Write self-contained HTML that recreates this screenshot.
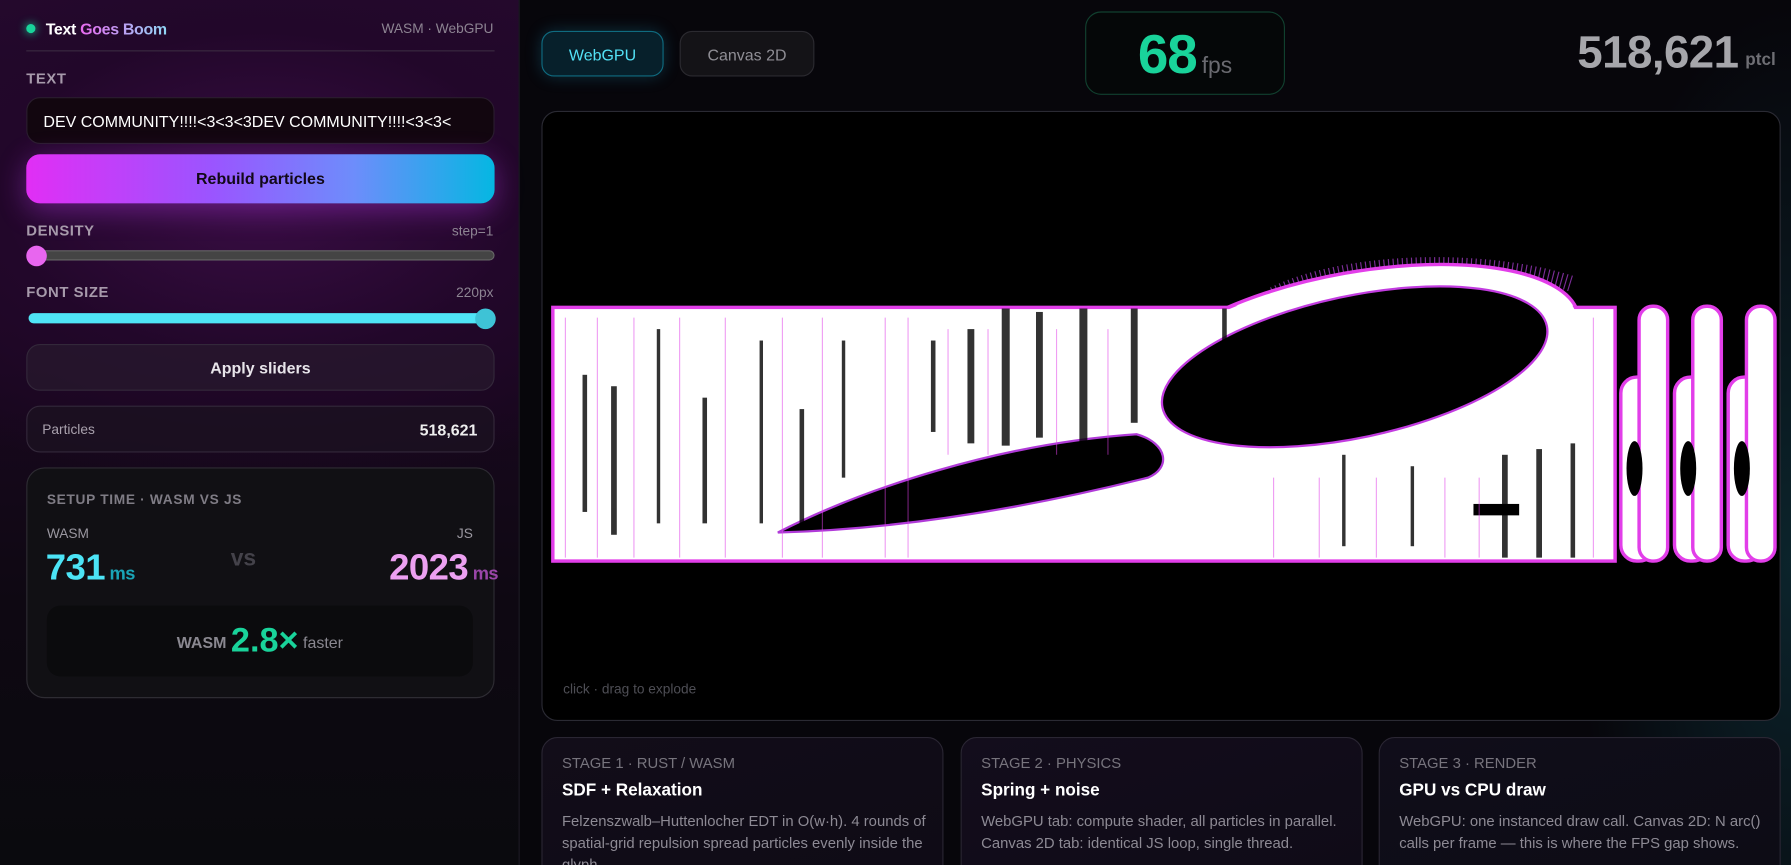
<!DOCTYPE html>
<html><head><meta charset="utf-8"><style>
*{box-sizing:border-box;margin:0;padding:0}
html,body{width:1791px;height:865px;overflow:hidden;background:#07060b}
body{font-family:"Liberation Sans",sans-serif;color:#fff;position:relative}
#w{position:absolute;left:0;top:0;width:1568px;height:757px;transform:scale(1.14222,1.1427);transform-origin:0 0;background:#07060b;overflow:hidden}
.side{position:absolute;left:0;top:0;width:455px;height:757px;border-right:1px solid #1c1a24;
background:radial-gradient(ellipse 420px 260px at 230px 170px,#3a0d45 0%,#22072a 55%,transparent 100%),linear-gradient(180deg,#250a2e 0%,#1a0720 40%,#0e0812 70%,#0a0a0e 100%)}
.abs{position:absolute}
.lbl{font-size:13px;font-weight:bold;color:#a79aab;letter-spacing:.5px}
.sm{font-size:12px;color:#8d8492}
.card{position:absolute;border:1px solid #2a2633;border-radius:14px;background:#110d17}
</style></head><body><div id="w">
<div class="abs" style="left:1380px;top:0;width:188px;height:757px;background:radial-gradient(ellipse at 100% 65%,rgba(15,60,70,.55),transparent 70%)"></div>
<div class="side">
 <div class="abs" style="left:23px;top:21px;width:8px;height:8px;border-radius:50%;background:#19d39a;box-shadow:0 0 8px #19d39a"></div>
 <div class="abs" style="left:40px;top:17px;font-size:14px;font-weight:bold;letter-spacing:-.3px">Text <span style="background:linear-gradient(90deg,#e96af0,#8fd6f5);-webkit-background-clip:text;color:transparent">Goes Boom</span></div>
 <div class="abs sm" style="right:22px;top:18px">WASM · WebGPU</div>
 <div class="abs" style="left:23px;top:44px;width:410px;height:1px;background:#3a2a40"></div>
 <div class="abs lbl" style="left:23px;top:61px">TEXT</div>
 <div class="abs" style="left:23px;top:85px;width:410px;height:41px;border-radius:12px;background:#12060f;border:1px solid #2a1d2e;padding:12px 14px;font-size:14px;white-space:nowrap;overflow:hidden">DEV COMMUNITY!!!!&lt;3&lt;3&lt;3DEV COMMUNITY!!!!&lt;3&lt;3&lt;</div>
 <div class="abs" style="left:23px;top:135px;width:410px;height:43px;border-radius:12px;background:linear-gradient(90deg,#e12ef5,#9a55ff 40%,#6d8dfb 70%,#05b7e2);box-shadow:0 6px 24px rgba(170,50,220,.45);text-align:center;line-height:43px;font-size:14px;font-weight:bold;color:#120818">Rebuild particles</div>
 <div class="abs lbl" style="left:23px;top:194px">DENSITY</div>
 <div class="abs sm" style="right:22px;top:195px">step=1</div>
 <div class="abs" style="left:25px;top:219px;width:408px;height:9px;border-radius:5px;background:#444;border:1px solid #666"></div>
 <div class="abs" style="left:23px;top:215px;width:18px;height:18px;border-radius:50%;background:#e866ef"></div>
 <div class="abs lbl" style="left:23px;top:248px">FONT SIZE</div>
 <div class="abs sm" style="right:22px;top:249px">220px</div>
 <div class="abs" style="left:25px;top:274px;width:406px;height:9px;border-radius:5px;background:#4fe5f6"></div>
 <div class="abs" style="left:416px;top:270px;width:18px;height:18px;border-radius:50%;background:#3ec3d6"></div>
 <div class="abs" style="left:23px;top:301px;width:410px;height:41px;border-radius:12px;background:rgba(40,25,45,.7);border:1px solid #33283a;text-align:center;line-height:41px;font-size:14px;font-weight:bold;color:#e8e4ea">Apply sliders</div>
 <div class="abs" style="left:23px;top:355px;width:410px;height:41px;border-radius:12px;background:rgba(28,18,32,.8);border:1px solid #33283a"></div>
 <div class="abs" style="left:37px;top:369px;font-size:12px;color:#a9a1ad">Particles</div>
 <div class="abs" style="right:36px;top:368px;font-size:14px;font-weight:bold;color:#eee">518,621</div>
 <div class="abs" style="left:23px;top:409px;width:410px;height:202px;border-radius:16px;background:#111014;border:1px solid #2e2c33"></div>
 <div class="abs" style="left:41px;top:430px;font-size:12px;font-weight:bold;color:#7f7c85;letter-spacing:.6px">SETUP TIME · WASM VS JS</div>
 <div class="abs" style="left:41px;top:460px;font-size:12px;color:#9a97a0">WASM</div>
 <div class="abs" style="right:40px;top:460px;font-size:12px;color:#9a97a0">JS</div>
 <div class="abs" style="left:40px;top:478px;font-size:32px;font-weight:bold;color:#4ce4f6;letter-spacing:-.5px">731<span style="font-size:16px;color:#1aa4b6;margin-left:4px">ms</span></div>
 <div class="abs" style="left:202px;top:478px;font-size:20px;font-weight:bold;color:#44424a">vs</div>
 <div class="abs" style="right:18px;top:478px;font-size:32px;font-weight:bold;color:#eca0f1;letter-spacing:-.5px">2023<span style="font-size:16px;color:#9a46a8;margin-left:4px">ms</span></div>
 <div class="abs" style="left:41px;top:530px;width:373px;height:62px;border-radius:12px;background:#0b0b0d;text-align:center;padding-top:14px;font-size:14px;color:#8a8890;font-weight:bold">WASM <span style="font-size:30px;color:#19d39a;vertical-align:-3px">2.8×</span> <span style="font-weight:normal;font-size:14px">faster</span></div>
</div>

<div class="abs" style="left:474px;top:27px;width:107px;height:40px;border-radius:11px;background:#07202b;border:1px solid #0f6b80;box-shadow:0 0 14px rgba(30,170,210,.25);text-align:center;line-height:40px;font-size:14px;color:#53e2f6">WebGPU</div>
<div class="abs" style="left:595px;top:27px;width:118px;height:40px;border-radius:11px;background:#141317;border:1px solid #2b2a30;text-align:center;line-height:40px;font-size:14px;color:#8f8e95">Canvas 2D</div>
<div class="abs" style="left:950px;top:10px;width:175px;height:73px;border-radius:14px;background:#050708;border:1px solid #11402f;text-align:center;padding-top:10px"><span style="font-size:48px;font-weight:bold;color:#19d39a;letter-spacing:-1px">68</span> <span style="font-size:20px;color:#6a6a70">fps</span></div>
<div class="abs" style="right:46px;top:24px;font-size:40px;font-weight:bold;color:#a6a6ab;letter-spacing:-.5px">518,621</div>
<div class="abs" style="left:1528px;top:44px;font-size:15px;font-weight:bold;color:#6e6e74">ptcl</div>

<div class="abs" style="left:474px;top:97px;width:1085px;height:534px;border-radius:14px;background:#000;border:1px solid #2a2a33;overflow:hidden">
<svg width="1085" height="534" style="position:absolute;left:0;top:0">
 <path d="M640 160 C700 130 820 125 900 150" stroke="#b040d8" stroke-width="14" fill="none" stroke-dasharray="1 3" opacity=".7"/>
 <g stroke="#e23ee9" stroke-width="3" fill="#fff">
  <ellipse cx="715" cy="212" rx="195" ry="72" transform="rotate(-10 715 212)"/>
  <rect x="9" y="171" width="930" height="222"/>
  <rect x="944" y="232" width="30" height="161" rx="14"/>
  <rect x="960" y="170" width="25" height="223" rx="12"/>
  <rect x="991" y="232" width="30" height="161" rx="14"/>
  <rect x="1007" y="170" width="25" height="223" rx="12"/>
  <rect x="1038" y="232" width="30" height="161" rx="14"/>
  <rect x="1054" y="170" width="25" height="223" rx="12"/>
 </g>
 <rect x="11" y="173" width="926" height="218" fill="#fff"/>
 <ellipse cx="715" cy="212" rx="193" ry="70" transform="rotate(-10 715 212)" fill="#fff"/>
 <g fill="#000">
  <ellipse cx="956" cy="312" rx="7" ry="24"/><ellipse cx="1003" cy="312" rx="7" ry="24"/><ellipse cx="1050" cy="312" rx="7" ry="24"/>
  <ellipse cx="711" cy="223" rx="172" ry="62" transform="rotate(-12 711 223)" stroke="#c23ce0" stroke-width="2"/>
  <path d="M206 368 C280 330 400 290 520 282 C548 290 550 312 530 320 C430 345 320 365 206 368Z" stroke="#b03ad8" stroke-width="2"/>
  <rect x="815" y="343" width="40" height="10"/>
 </g>
 <g fill="#000" opacity=".8">
  <rect x="35" y="230" width="4" height="120"/><rect x="60" y="240" width="5" height="130"/><rect x="100" y="190" width="3" height="170"/>
  <rect x="140" y="250" width="4" height="110"/><rect x="190" y="200" width="3" height="160"/><rect x="225" y="260" width="4" height="100"/>
  <rect x="262" y="200" width="3" height="120"/><rect x="340" y="200" width="4" height="80"/><rect x="372" y="190" width="6" height="100"/>
  <rect x="402" y="172" width="7" height="120"/><rect x="432" y="175" width="6" height="110"/><rect x="470" y="172" width="7" height="120"/>
  <rect x="515" y="172" width="6" height="100"/><rect x="595" y="172" width="4" height="30"/>
  <rect x="700" y="300" width="3" height="80"/><rect x="760" y="310" width="3" height="70"/><rect x="840" y="300" width="5" height="90"/>
  <rect x="870" y="295" width="5" height="95"/><rect x="900" y="290" width="4" height="100"/>
 </g>
 <g stroke="#e040e8" stroke-width="1" opacity=".5">
  <path d="M20 180V390M48 180V390M80 180V390M120 180V390M160 180V390M210 180V390M245 180V390M300 180V390M320 180V390M355 190V300M390 190V300M450 190V300M495 190V300M640 320V390M680 320V390M730 320V390M790 320V390M820 320V390M920 180V390"/>
 </g>
 <text x="18" y="509" font-size="12" fill="#4e4e55" font-family="Liberation Sans">click · drag to explode</text>
</svg>
</div>

<div class="card" style="left:474px;top:645px;width:352px;height:240px;background:linear-gradient(160deg,#120d19,#0d0a14)"></div>
<div class="card" style="left:841px;top:645px;width:352px;height:240px;background:linear-gradient(160deg,#130d1c,#0d0a14)"></div>
<div class="card" style="left:1207px;top:645px;width:352px;height:240px;background:linear-gradient(160deg,#100d1a,#0b0c12)"></div>
<div class="abs" style="left:492px;top:660px;font-size:13px;color:#77747d">STAGE 1 · RUST / WASM</div>
<div class="abs" style="left:492px;top:683px;font-size:15px;font-weight:bold">SDF + Relaxation</div>
<div class="abs" style="left:492px;top:709px;width:322px;font-size:13px;line-height:19px;color:#8d8a94">Felzenszwalb–Huttenlocher EDT in O(w·h). 4 rounds of spatial-grid repulsion spread particles evenly inside the glyph.</div>
<div class="abs" style="left:859px;top:660px;font-size:13px;color:#77747d">STAGE 2 · PHYSICS</div>
<div class="abs" style="left:859px;top:683px;font-size:15px;font-weight:bold">Spring + noise</div>
<div class="abs" style="left:859px;top:709px;width:325px;font-size:13px;line-height:19px;color:#8d8a94">WebGPU tab: compute shader, all particles in parallel. Canvas 2D tab: identical JS loop, single thread.</div>
<div class="abs" style="left:1225px;top:660px;font-size:13px;color:#77747d">STAGE 3 · RENDER</div>
<div class="abs" style="left:1225px;top:683px;font-size:15px;font-weight:bold">GPU vs CPU draw</div>
<div class="abs" style="left:1225px;top:709px;width:325px;font-size:13px;line-height:19px;color:#8d8a94">WebGPU: one instanced draw call. Canvas 2D: N arc() calls per frame — this is where the FPS gap shows.</div>
</div></body></html>
